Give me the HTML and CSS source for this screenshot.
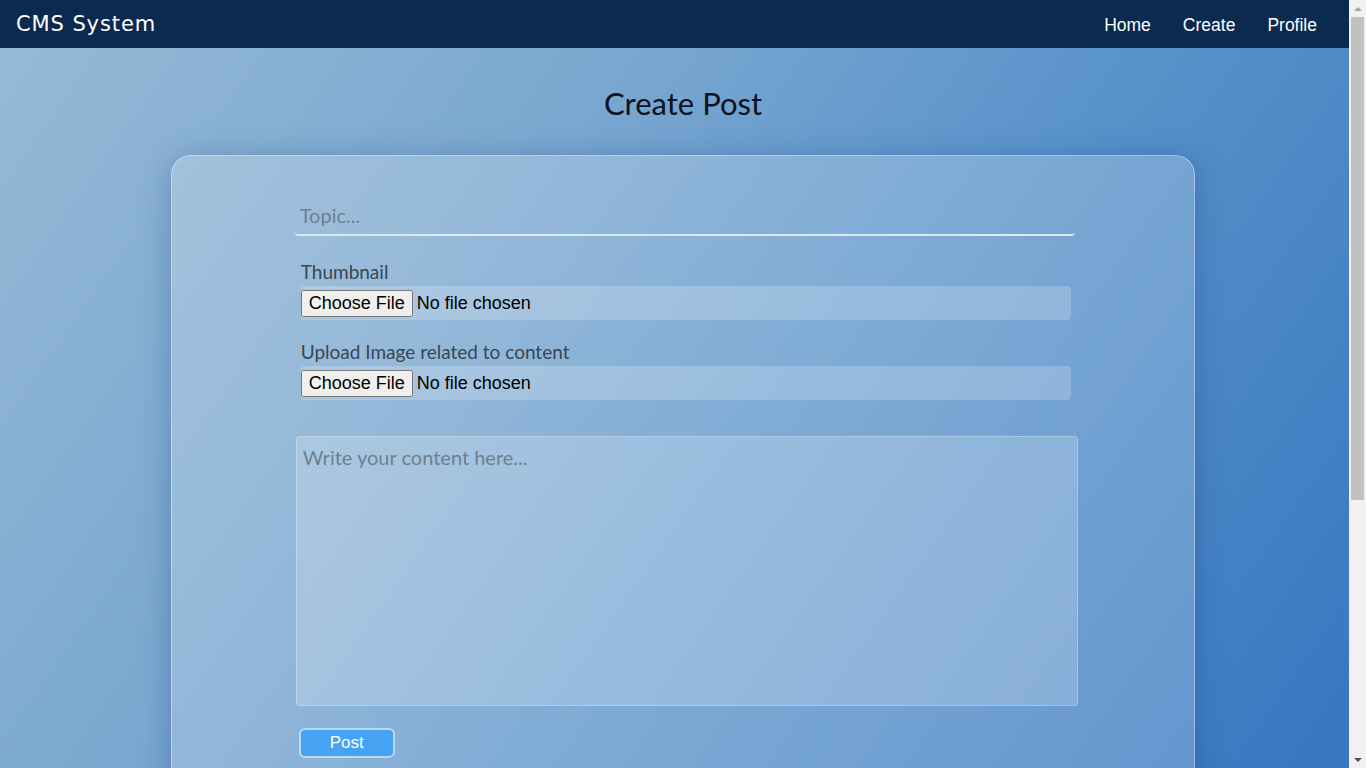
FILE: index.html
```html
<!DOCTYPE html>
<html>
<head>
<meta charset="utf-8">
<title>CMS System</title>
<link rel="stylesheet" href="styles.css">
</head>
<body>
<nav class="navbar">
  <div class="brand">CMS System</div>
  <div class="links">
    <a href="#">Home</a>
    <a href="#">Create</a>
    <a href="#">Profile</a>
  </div>
</nav>
<main class="page">
  <h1 class="title">Create Post</h1>
  <form class="card">
    <input class="topic" type="text" placeholder="Topic...">
    <label class="label">Thumbnail</label>
    <div class="file-row"><input type="file"></div>
    <label class="label">Upload Image related to content</label>
    <div class="file-row"><input type="file"></div>
    <textarea class="content" placeholder="Write your content here..."></textarea>
    <button class="post" type="button">Post</button>
  </form>
</main>
<div class="scrollbar" aria-hidden="true">
  <div class="sb-btn"><span class="arrow-up"></span></div>
  <div class="sb-thumb"></div>
  <div class="sb-track"></div>
  <div class="sb-btn"><span class="arrow-down"></span></div>
</div>
</body>
</html>
```
FILE: styles.css
```css
html, body {
  margin: 0;
  padding: 0;
}
::-webkit-scrollbar {
  width: 0;
  height: 0;
}
body {
  min-height: 100vh;
  overflow-x: hidden;
  background: linear-gradient(125deg, #97bad6 0%, #7aa7d0 35%, #5b94cb 60%, #3676c0 100%);
  background-attachment: fixed;
  font-family: "Lato", "Open Sans", sans-serif;
}
.navbar {
  height: 48px;
  margin-right: 17px;
  background: #0b2a4f;
  display: flex;
  align-items: center;
  justify-content: space-between;
  padding: 0 32px 0 16px;
  box-sizing: border-box;
}
.brand {
  color: #ffffff;
  font-family: "DejaVu Sans", sans-serif;
  font-size: 21px;
  letter-spacing: 0.9px;
  margin-top: -1px;
}
.links {
  display: flex;
  gap: 32px;
  margin-top: 3px;
}
.links a {
  color: #ffffff;
  text-decoration: none;
  font-family: "Liberation Sans", Arial, sans-serif;
  font-size: 17.5px;
}
.page {
  width: 100vw;
  display: flex;
  flex-direction: column;
  align-items: center;
}
.title {
  margin: 36px 0 0;
  height: 71px;
  font-family: "Lato", sans-serif;
  font-weight: 400;
  font-size: 31px;
  color: #0d1320;
  line-height: 38px;
}
.card {
  width: 75%;
  border: 1px solid rgba(255, 255, 255, 0.35);
  border-radius: 20px;
  background: rgba(255, 255, 255, 0.2);
  box-shadow: 0 4px 30px rgba(20, 60, 130, 0.35);
  padding: 44px 120px 360px 123px;
  box-sizing: border-box;
  display: flex;
  flex-direction: column;
  align-items: flex-start;
  margin-bottom: 40px;
}
.topic {
  width: 780px;
  height: 36px;
  box-sizing: border-box;
  background: transparent;
  border: none;
  border-bottom: 2px solid #dce8f2;
  border-radius: 0 0 4px 4px;
  outline: none;
  font-family: "Lato", sans-serif;
  font-size: 20px;
  padding: 0 5px 4px;
  color: #333;
}
.topic::placeholder {
  color: #6d7f8f;
}
.label {
  margin: 25px 0 3px 6px;
  font-family: "Lato", sans-serif;
  font-size: 19px;
  color: #3a4654;
  line-height: 22px;
}
.file-row {
  margin-left: 6px;
  width: 770px;
  height: 34px;
  box-sizing: border-box;
  background: rgba(255, 255, 255, 0.2);
  border-radius: 4px;
  display: flex;
  align-items: center;
}
.file-row + .label {
  margin-top: 21px;
}
.file-row input {
  font-family: "Liberation Sans", Arial, sans-serif;
  font-size: 18px;
  color: #000;
}
.content {
  margin: 36px 0 0 1px;
  width: 782px;
  height: 270px;
  box-sizing: border-box;
  background: rgba(255, 255, 255, 0.2);
  border: 1px solid rgba(255, 255, 255, 0.25);
  border-radius: 4px;
  resize: none;
  outline: none;
  font-family: "Lato", sans-serif;
  font-size: 20px;
  padding: 8px 6px;
  color: #333;
}
.content::placeholder {
  color: #6d7f8f;
}
.post {
  margin: 22px 0 0 4px;
  width: 96px;
  height: 30px;
  background: #46a2f2;
  border: 2px solid #b7dbf7;
  border-radius: 6px;
  color: #ffffff;
  font-family: "Liberation Sans", Arial, sans-serif;
  font-size: 17px;
  padding: 0;
}
.scrollbar {
  position: fixed;
  top: 0;
  right: 0;
  width: 17px;
  height: 100vh;
  background: #f1f1f1;
  display: flex;
  flex-direction: column;
}
.sb-btn {
  height: 17px;
  flex: none;
  display: flex;
  align-items: center;
  justify-content: center;
}
.arrow-up {
  width: 0;
  height: 0;
  border-left: 4px solid transparent;
  border-right: 4px solid transparent;
  border-bottom: 4px solid #a3a3a3;
}
.arrow-down {
  width: 0;
  height: 0;
  border-left: 4px solid transparent;
  border-right: 4px solid transparent;
  border-top: 4px solid #505050;
}
.sb-thumb {
  height: 483px;
  flex: none;
  margin: 0 2px;
  background: #c1c1c1;
}
.sb-track {
  flex: 1;
}
```
